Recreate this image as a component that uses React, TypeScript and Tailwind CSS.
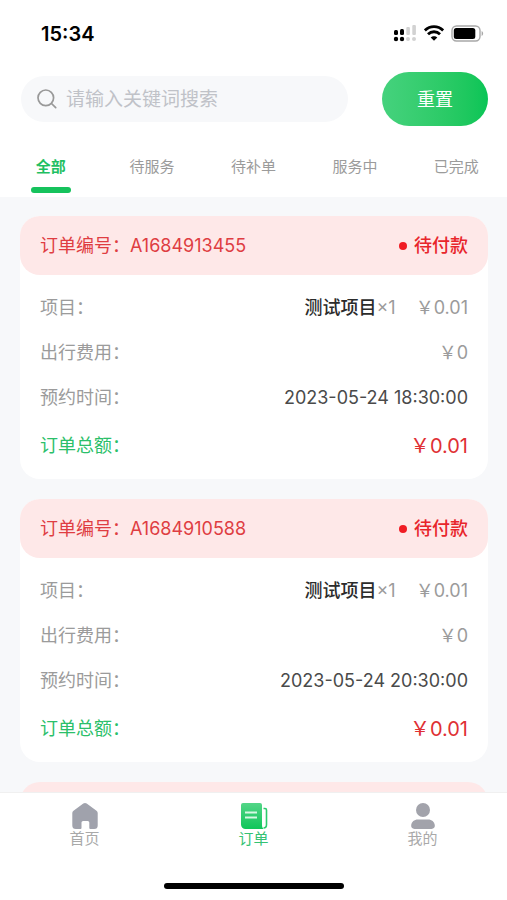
import React, { useState } from "react";

type Order = {
  id: string;
  status: string;
  project: string;
  count: number;
  price: string;
  travelFee: string;
  time: string;
  total: string;
};

const tabs = ["全部", "待服务", "待补单", "服务中", "已完成"];

const orders: Order[] = [
  {
    id: "A1684913455",
    status: "待付款",
    project: "测试项目",
    count: 1,
    price: "0.01",
    travelFee: "0",
    time: "2023-05-24 18:30:00",
    total: "0.01",
  },
  {
    id: "A1684910588",
    status: "待付款",
    project: "测试项目",
    count: 1,
    price: "0.01",
    travelFee: "0",
    time: "2023-05-24 20:30:00",
    total: "0.01",
  },
];

const StatusBar = () => (
  <div className="flex h-[72px] items-start justify-between pt-[22px] pr-[23px] pl-[41px]">
    <span className="text-[20px] leading-6 font-semibold text-black">15:34</span>
    <div className="flex h-[22px] items-center gap-[7px]">
      {/* dual sim signal */}
      <svg width="24" height="18" viewBox="0 0 24 18">
        <g fill="#000">
          <rect x="1" y="6" width="4" height="5" rx="1.5" />
          <rect x="7" y="5" width="4" height="6" rx="1.5" />
          <circle cx="3" cy="15" r="2.2" />
          <circle cx="9" cy="15" r="2.2" />
        </g>
        <g fill="#d2d2d2">
          <rect x="13.3" y="3" width="3.6" height="8" rx="1" />
          <rect x="19.3" y="1" width="3.6" height="10" rx="1" />
          <circle cx="15" cy="15" r="2" />
          <circle cx="21" cy="15" r="2" />
        </g>
      </svg>
      <svg width="20" height="16" viewBox="0 0 20 16" fill="none" stroke="#000">
        <path d="M.8 5.400C6 .3 14 .3 19.200 5.400" strokeWidth="2.900" />
        <path d="M4 9.200C7.400 5.900 12.600 5.900 16 9.200" strokeWidth="2.800" />
        <path d="M10 15.800 6.700 12.500C8.500 10.700 11.500 10.700 13.300 12.500Z" fill="#000" stroke="none" />
      </svg>
      <svg width="33" height="17" viewBox="0 0 33 17">
        <rect x="1" y="1" width="28" height="15" rx="4.5" fill="none" stroke="#a8a8a8" strokeWidth="1.4" />
        <rect x="2.8" y="3" width="21.5" height="11" rx="2.5" fill="#000" />
        <path d="M30.6 6v5c2-.7 2-4.300 0-5Z" fill="#a8a8a8" />
      </svg>
    </div>
  </div>
);

const OrderRow = ({ label, children }: { label: string; children: React.ReactNode }) => (
  <div className="flex h-[45px] items-center justify-between text-[#9b9b9b]">
    <span>{label}：</span>
    {children}
  </div>
);

const OrderCard = ({ order }: { order: Order }) => (
  <article className="shrink-0 rounded-[20px] bg-white text-[18px] leading-6">
    <header className="flex h-[59px] items-center justify-between rounded-[20px] bg-[#fee8e8] px-5 pt-px">
      <h2 className="text-[#df3d42]">订单编号：{order.id}</h2>
      <span className="flex items-center gap-[7px] font-medium text-[#e8252b]">
        <i className="size-2 rounded-full bg-[#f01c24]" />
        {order.status}
      </span>
    </header>
    <div className="px-5 pt-[10px] pb-2">
      <OrderRow label="项目">
        <span className="flex">
          <b className="font-medium text-[#2b2b2b]">{order.project}</b>
          <span>×{order.count}</span>
          <span className="ml-5">￥{order.price}</span>
        </span>
      </OrderRow>
      <OrderRow label="出行费用">
        <span>￥{order.travelFee}</span>
      </OrderRow>
      <OrderRow label="预约时间">
        <time className="text-[#4a4a4a]">{order.time}</time>
      </OrderRow>
      <div className="flex h-[51px] items-center justify-between">
        <span className="text-[#2bbf6a]">订单总额：</span>
        <span className="text-[20px] text-[#df3034]">￥{order.total}</span>
      </div>
    </div>
  </article>
);

const HomeIcon = () => (
  <svg width="28" height="28" viewBox="0 0 28 28" fill="#a0a2ac">
    <path d="M12.300 1.600a3 3 0 0 1 3.400 0l9.800 7.200c.8.600 1.200 1.300 1.200 2.300v12.400a3.500 3.500 0 0 1-3.500 3.500h-3.900a1 1 0 0 1-1-1v-5.500a1.600 1.600 0 0 0-1.600-1.600h-4.600a1.600 1.600 0 0 0-1.600 1.600V26a1 1 0 0 1-1 1H4.800a3.500 3.500 0 0 1-3.500-3.500V11.100c0-1 .4-1.700 1.200-2.300Z" />
  </svg>
);

const OrderIcon = () => (
  <svg width="28" height="28" viewBox="0 0 28 28" fill="none">
    <defs>
      <linearGradient id="orderFill" x1="0" y1="0" x2="0" y2="1">
        <stop stopColor="#53d587" />
        <stop offset="1" stopColor="#0fc65a" />
      </linearGradient>
    </defs>
    <path
      d="M3 1h17a2 2 0 0 1 2 2v19.500c0 2 .4 3.400 1.400 4.500H5.500A4.500 4.500 0 0 1 1 22.500V3a2 2 0 0 1 2-2Z"
      fill="url(#orderFill)"
    />
    <path d="M23.500 6.500H25c.9 0 1.500.6 1.500 1.500v14.500c0 2.300-1.100 3.500-3 3.500" stroke="#2ccb6c" strokeWidth="1.600" />
    <path d="M5 10.500h12M5 15.500h12" stroke="#d6f8e3" strokeWidth="2" />
  </svg>
);

const MineIcon = () => (
  <svg width="28" height="28" viewBox="0 0 28 28" fill="#a2a3ab">
    <circle cx="14" cy="8" r="7" />
    <path d="M9 17.500h10c4 0 6.300 2.300 6.800 5.600.4 2.300-1 3.900-3.300 3.900h-17c-2.300 0-3.700-1.600-3.300-3.900.5-3.300 2.800-5.600 6.800-5.600Z" />
  </svg>
);

const navItems = [
  { name: "首页", icon: <HomeIcon /> },
  { name: "订单", icon: <OrderIcon /> },
  { name: "我的", icon: <MineIcon /> },
];

const App = () => {
  const [activeTab, setActiveTab] = useState("全部");
  const [activeNav, setActiveNav] = useState("订单");
  const [keyword, setKeyword] = useState("");

  return (
    <div className="flex h-screen flex-col bg-[#f7f8fa] font-['Inter','Noto_Sans_CJK_SC',sans-serif]">
      <div className="bg-white">
        <StatusBar />
        <div className="flex items-center gap-[34px] pr-[19px] pl-[21px]">
          <label className="flex h-[46px] min-w-0 flex-1 items-center gap-2 rounded-full bg-[#f7f8fa] pl-[15px]">
            <svg width="22" height="22" viewBox="0 0 22 22" fill="none" stroke="#999" strokeWidth="1.700">
              <circle cx="9.800" cy="9.800" r="7.800" />
              <path d="m15.500 15.500 4.200 4.200" strokeLinecap="round" />
            </svg>
            <input
              type="text"
              aria-label="搜索"
              className="min-w-0 flex-1 bg-transparent pt-0.5 text-[19px] outline-none placeholder:text-[#c0c2c8]"
              placeholder="请输入关键词搜索"
              value={keyword}
              onChange={(e) => setKeyword(e.target.value)}
            />
          </label>
          <button
            onClick={() => setKeyword("")}
            className="h-[54px] w-[106px] rounded-full bg-linear-to-r from-[#45d27d] to-[#08c556] text-[18px] text-white"
          >
            重置
          </button>
        </div>
        <div className="flex pt-[29px] pb-1">
          {tabs.map((tab) => (
            <button
              key={tab}
              onClick={() => setActiveTab(tab)}
              className={`flex flex-1 flex-col items-center gap-2 text-[15px] leading-6 ${
                activeTab === tab ? "font-bold text-[#1fbf62]" : "text-[#9b9b9b]"
              }`}
            >
              {tab}
              {activeTab === tab && <span className="h-[6px] w-10 rounded-full bg-[#15c25c]" />}
            </button>
          ))}
        </div>
      </div>

      <main className="flex min-h-0 flex-1 flex-col gap-5 overflow-hidden pt-[19px] pr-[19px] pl-5">
        {orders.map((order) => (
          <OrderCard key={order.id} order={order} />
        ))}
        <div className="h-[59px] shrink-0 rounded-[20px] bg-[#fee8e8]" />
      </main>

      <nav className="border-t border-[#f0f0f0] bg-white pt-[9px]">
        <div className="flex">
          {navItems.map((item) => (
            <button
              key={item.name}
              onClick={() => setActiveNav(item.name)}
              className={`flex flex-1 flex-col items-center text-[15px] leading-[18px] ${
                activeNav === item.name ? "text-[#35c273]" : "text-[#a9a9a9]"
              }`}
            >
              {item.icon}
              {item.name}
            </button>
          ))}
        </div>
        <div className="mx-auto mt-[35px] mb-[11px] h-[6px] w-[180px] rounded-full bg-black" />
      </nav>
    </div>
  );
};

export default App;
